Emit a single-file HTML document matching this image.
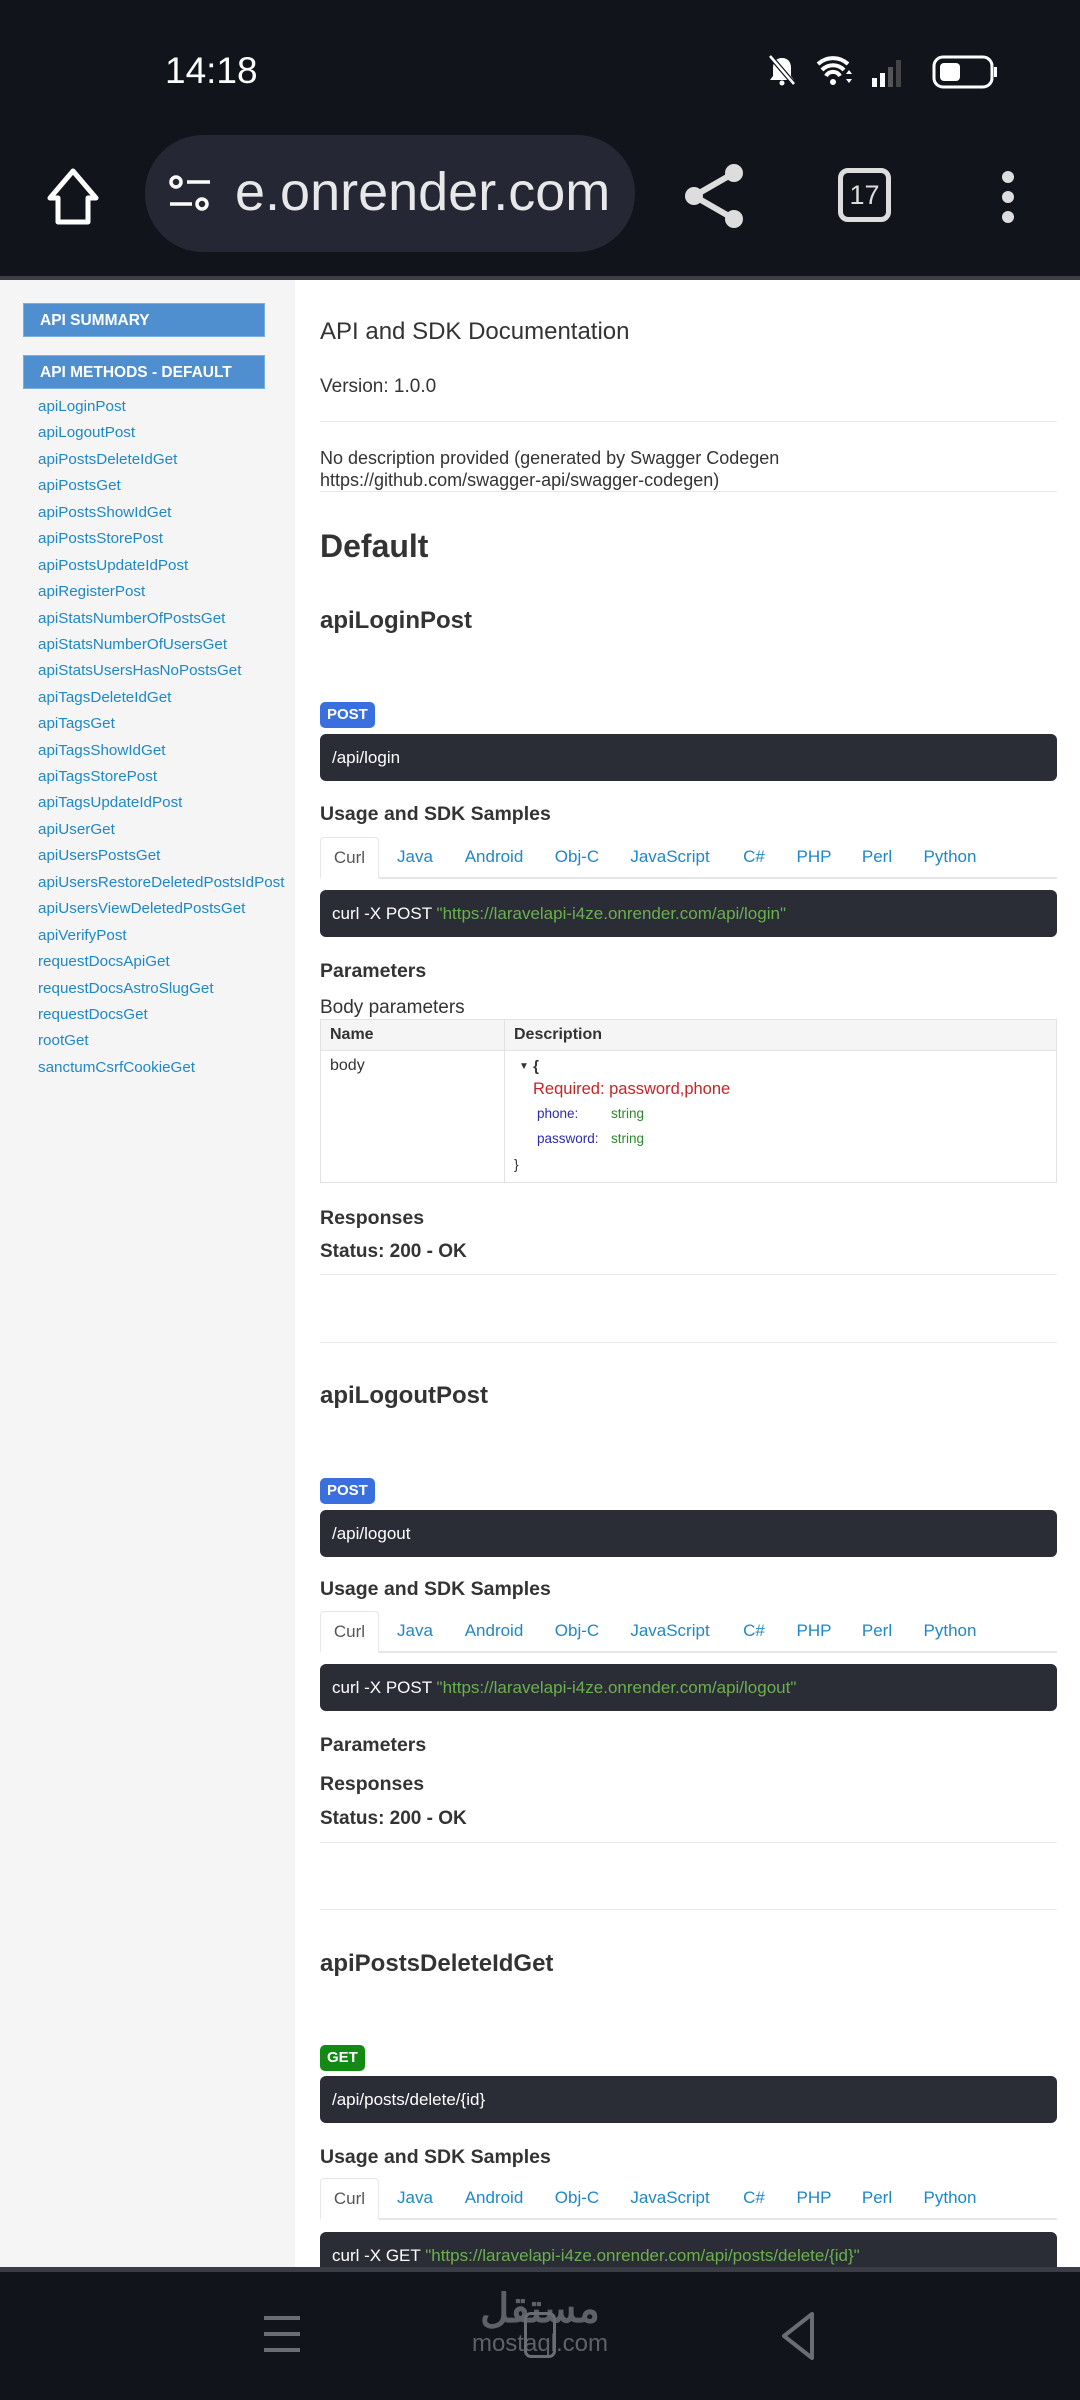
<!DOCTYPE html>
<html><head><meta charset="utf-8">
<style>
*{margin:0;padding:0;box-sizing:border-box}
body{width:1080px;height:2400px;position:relative;overflow:hidden;background:#fff;font-family:"Liberation Sans",Arial,sans-serif;color:#333}
.a{position:absolute;white-space:nowrap}
#top{position:absolute;left:0;top:0;width:1080px;height:280px;background:#11141b;border-bottom:4px solid #3c3f47}
#side{position:absolute;left:0;top:280px;width:295px;height:1990px;background:#f5f5f5}
.btn{position:absolute;left:23px;width:242px;height:34px;background:#4f8fcf;border:1px solid #7aaee0;color:#fff;font-weight:bold;font-size:15.5px;line-height:33px;padding-left:16px}
.lk{position:absolute;left:38px;font-size:15.2px;color:#1e88c7;line-height:20px}
.hr{position:absolute;left:320px;width:737px;height:1px;background:#e8e8e8}
.bar{position:absolute;left:320px;width:737px;height:47px;background:#2a2c36;border-radius:6px;color:#fff;font-size:17px;line-height:47px;padding-left:12px}
.bar .g{color:#6bb04f}
.badge{position:absolute;left:320px;height:26px;border-radius:5px;color:#fff;font-weight:bold;font-size:15px;line-height:26px;padding:0 7px}
.h3{position:absolute;left:320px;font-size:24px;font-weight:bold;color:#333}
.h4{position:absolute;left:320px;font-size:19.5px;font-weight:bold;color:#333}
.tabs{position:absolute;left:320px;width:737px;height:42px;border-bottom:2px solid #e6e6e6}
.tabs .cu{position:absolute;left:0;top:0;width:59px;height:42px;border:1px solid #e6e6e6;border-bottom:2px solid #fff;background:#fff;border-radius:4px 4px 0 0;color:#555;font-size:17px;line-height:40px;text-align:center}
.tabs span{position:absolute;top:0;line-height:40px;font-size:17px;color:#1e88c7;transform:translateX(-50%)}
#bot{position:absolute;left:0;top:2267px;width:1080px;height:133px;background:#11141b;border-top:5px solid #3a3d45}
</style></head><body>
<div id="top">
 <div class="a" style="left:165px;top:50px;font-size:37px;color:#fff">14:18</div>
 <svg class="a" style="left:760px;top:50px" width="250" height="44" viewBox="0 0 250 44">
  <path d="M22 8c-6 0-9 4-9 10v8l-3 4h24l-3-4v-8c0-6-3-10-9-10z" fill="#fff"/>
  <line x1="10" y1="6" x2="34" y2="34" stroke="#11141b" stroke-width="5"/>
  <line x1="10" y1="6" x2="34" y2="34" stroke="#fff" stroke-width="2.5"/>
  <circle cx="22" cy="33" r="2.5" fill="#fff"/>
  <path d="M58 14a22 22 0 0 1 30 0" stroke="#fff" stroke-width="4" fill="none"/>
  <path d="M62 20a15 15 0 0 1 22 0" stroke="#fff" stroke-width="4" fill="none"/>
  <path d="M66 26a8 8 0 0 1 14 0" stroke="#fff" stroke-width="4" fill="none"/>
  <circle cx="73" cy="32" r="3" fill="#fff"/>
  <path d="M86 24l3-4 3 4zM86 29l3 4 3-4z" fill="#fff"/>
  <rect x="112" y="28" width="5" height="9" fill="#fff"/>
  <rect x="120" y="23" width="5" height="14" fill="#fff"/>
  <rect x="128" y="17" width="5" height="20" fill="#555"/>
  <rect x="136" y="10" width="5" height="27" fill="#444"/>
  <rect x="174" y="7" width="58" height="30" rx="9" stroke="#fff" stroke-width="3" fill="none"/>
  <rect x="180" y="13" width="20" height="18" rx="4" fill="#fff"/>
  <rect x="234" y="17" width="3" height="10" fill="#fff"/>
 </svg>
 <svg class="a" style="left:44px;top:165px" width="58" height="62" viewBox="0 0 58 62"><path d="M29 6L6 33h8v24h30V33h8z" stroke="#fff" stroke-width="5" fill="none" stroke-linejoin="round"/></svg>
 <div class="a" style="left:145px;top:135px;width:490px;height:117px;border-radius:58px;background:#252834;overflow:hidden">
  <svg class="a" style="left:23px;top:40px" width="44" height="38" viewBox="0 0 44 38"><circle cx="8" cy="7" r="5" stroke="#fff" stroke-width="3.5" fill="none"/><line x1="19" y1="7" x2="42" y2="7" stroke="#fff" stroke-width="3.5"/><line x1="2" y1="29" x2="24" y2="29" stroke="#fff" stroke-width="3.5"/><circle cx="34" cy="29" r="5" stroke="#fff" stroke-width="3.5" fill="none"/></svg>
  <div class="a" style="left:90px;top:26px;font-size:54px;color:#e8e8ea;letter-spacing:0px">e.onrender.com</div>
 </div>
 <svg class="a" style="left:684px;top:163px" width="62" height="66" viewBox="0 0 62 66"><circle cx="50" cy="10" r="9" fill="#ddd"/><circle cx="10" cy="33" r="9" fill="#ddd"/><circle cx="50" cy="56" r="9" fill="#ddd"/><path d="M50 10L10 33L50 56" stroke="#ddd" stroke-width="6" fill="none"/></svg>
 <div class="a" style="left:838px;top:168px;width:53px;height:54px;border:5px solid #ddd;border-radius:10px;color:#ddd;font-size:27px;text-align:center;line-height:44px">17</div>
 <svg class="a" style="left:998px;top:168px" width="20" height="58" viewBox="0 0 20 58"><circle cx="10" cy="9" r="6" fill="#ddd"/><circle cx="10" cy="29" r="6" fill="#ddd"/><circle cx="10" cy="49" r="6" fill="#ddd"/></svg>
</div>

<div id="side">
 <div class="btn" style="top:23px">API SUMMARY</div>
 <div class="btn" style="top:75px">API METHODS - DEFAULT</div>
</div>
<div class="lk" style="top:397px">apiLoginPost</div>
<div class="lk" style="top:423px">apiLogoutPost</div>
<div class="lk" style="top:450px">apiPostsDeleteIdGet</div>
<div class="lk" style="top:476px">apiPostsGet</div>
<div class="lk" style="top:503px">apiPostsShowIdGet</div>
<div class="lk" style="top:529px">apiPostsStorePost</div>
<div class="lk" style="top:556px">apiPostsUpdateIdPost</div>
<div class="lk" style="top:582px">apiRegisterPost</div>
<div class="lk" style="top:609px">apiStatsNumberOfPostsGet</div>
<div class="lk" style="top:635px">apiStatsNumberOfUsersGet</div>
<div class="lk" style="top:661px">apiStatsUsersHasNoPostsGet</div>
<div class="lk" style="top:688px">apiTagsDeleteIdGet</div>
<div class="lk" style="top:714px">apiTagsGet</div>
<div class="lk" style="top:741px">apiTagsShowIdGet</div>
<div class="lk" style="top:767px">apiTagsStorePost</div>
<div class="lk" style="top:793px">apiTagsUpdateIdPost</div>
<div class="lk" style="top:820px">apiUserGet</div>
<div class="lk" style="top:846px">apiUsersPostsGet</div>
<div class="lk" style="top:873px">apiUsersRestoreDeletedPostsIdPost</div>
<div class="lk" style="top:899px">apiUsersViewDeletedPostsGet</div>
<div class="lk" style="top:926px">apiVerifyPost</div>
<div class="lk" style="top:952px">requestDocsApiGet</div>
<div class="lk" style="top:979px">requestDocsAstroSlugGet</div>
<div class="lk" style="top:1005px">requestDocsGet</div>
<div class="lk" style="top:1031px">rootGet</div>
<div class="lk" style="top:1058px">sanctumCsrfCookieGet</div>

<div class="a" style="left:320px;top:318px;font-size:24px;color:#333">API and SDK Documentation</div>
<div class="a" style="left:320px;top:376px;font-size:19px;color:#333">Version: 1.0.0</div>
<div class="hr" style="top:421px"></div>
<div class="a" style="left:320px;top:447px;font-size:18px;line-height:22px;color:#333">No description provided (generated by Swagger Codegen<br>https://github.com/swagger-api/swagger-codegen)</div>
<div class="hr" style="top:491px"></div>
<div class="a" style="left:320px;top:528px;font-size:32px;font-weight:bold;color:#333">Default</div>

<div class="h3" style="top:607px">apiLoginPost</div>
<div class="badge" style="top:702px;background:#3a6fe0">POST</div>
<div class="bar" style="top:734px">/api/login</div>
<div class="h4" style="top:803px">Usage and SDK Samples</div>
<div class="tabs" style="top:837px"><div class="cu">Curl</div><span style="left:95px">Java</span><span style="left:174px">Android</span><span style="left:257px">Obj-C</span><span style="left:350px">JavaScript</span><span style="left:434px">C#</span><span style="left:494px">PHP</span><span style="left:557px">Perl</span><span style="left:630px">Python</span></div>
<div class="bar" style="top:890px">curl -X POST <span class="g">"https://laravelapi-i4ze.onrender.com/api/login"</span></div>
<div class="h4" style="top:960px">Parameters</div>
<div class="a" style="left:320px;top:997px;font-size:19px;color:#333">Body parameters</div>
<div class="a" style="left:320px;top:1019px;width:737px;height:164px;border:1px solid #e2e2e2">
 <div class="a" style="left:0;top:0;width:735px;height:31px;background:#f5f5f5;border-bottom:1px solid #e2e2e2"></div>
 <div class="a" style="left:183px;top:0;width:1px;height:162px;background:#e2e2e2"></div>
 <div class="a" style="left:9px;top:6px;font-size:16px;font-weight:bold;color:#333">Name</div>
 <div class="a" style="left:193px;top:6px;font-size:16px;font-weight:bold;color:#333">Description</div>
 <div class="a" style="left:9px;top:37px;font-size:16px;color:#333">body</div>
 <div class="a" style="left:198px;top:38px;font-size:15px;color:#333"><span style="font-size:10px;vertical-align:2px">▼</span> <b>{</b></div>
 <div class="a" style="left:212px;top:60px;font-size:16.5px;color:#c8232a">Required: password,phone</div>
 <div class="a" style="left:216px;top:86px;font-size:13.5px;color:#2b2bab">phone:</div>
 <div class="a" style="left:290px;top:86px;font-size:13.5px;color:#2a8a2a">string</div>
 <div class="a" style="left:216px;top:111px;font-size:13.5px;color:#2b2bab">password:</div>
 <div class="a" style="left:290px;top:111px;font-size:13.5px;color:#2a8a2a">string</div>
 <div class="a" style="left:193px;top:136px;font-size:14px;color:#333">}</div>
</div>
<div class="h4" style="top:1207px">Responses</div>
<div class="h4" style="top:1241px;font-size:19px">Status: 200 - OK</div>
<div class="hr" style="top:1274px"></div>
<div class="hr" style="top:1342px"></div>

<div class="h3" style="top:1382px">apiLogoutPost</div>
<div class="badge" style="top:1478px;background:#3a6fe0">POST</div>
<div class="bar" style="top:1510px">/api/logout</div>
<div class="h4" style="top:1578px">Usage and SDK Samples</div>
<div class="tabs" style="top:1611px"><div class="cu">Curl</div><span style="left:95px">Java</span><span style="left:174px">Android</span><span style="left:257px">Obj-C</span><span style="left:350px">JavaScript</span><span style="left:434px">C#</span><span style="left:494px">PHP</span><span style="left:557px">Perl</span><span style="left:630px">Python</span></div>
<div class="bar" style="top:1664px">curl -X POST <span class="g">"https://laravelapi-i4ze.onrender.com/api/logout"</span></div>
<div class="h4" style="top:1734px">Parameters</div>
<div class="h4" style="top:1773px">Responses</div>
<div class="h4" style="top:1808px;font-size:19px">Status: 200 - OK</div>
<div class="hr" style="top:1842px"></div>
<div class="hr" style="top:1909px"></div>

<div class="h3" style="top:1950px">apiPostsDeleteIdGet</div>
<div class="badge" style="top:2045px;background:#138a13">GET</div>
<div class="bar" style="top:2076px">/api/posts/delete/{id}</div>
<div class="h4" style="top:2146px">Usage and SDK Samples</div>
<div class="tabs" style="top:2178px"><div class="cu">Curl</div><span style="left:95px">Java</span><span style="left:174px">Android</span><span style="left:257px">Obj-C</span><span style="left:350px">JavaScript</span><span style="left:434px">C#</span><span style="left:494px">PHP</span><span style="left:557px">Perl</span><span style="left:630px">Python</span></div>
<div class="bar" style="top:2232px">curl -X GET <span class="g">"https://laravelapi-i4ze.onrender.com/api/posts/delete/{id}"</span></div>

<div id="bot">
 <svg class="a" style="left:262px;top:40px" width="40" height="44" viewBox="0 0 40 44"><rect x="2" y="4" width="36" height="4" fill="#6a6d74"/><rect x="2" y="20" width="36" height="4" fill="#6a6d74"/><rect x="2" y="36" width="36" height="4" fill="#6a6d74"/></svg>
 <div class="a" style="left:470px;top:15px;width:140px;text-align:center;font-family:'Liberation Sans','Noto Sans CJK SC',sans-serif;font-size:40px;font-weight:bold;color:#5e6168;line-height:44px">مستقل</div>
 <div class="a" style="left:470px;top:58px;width:140px;text-align:center;font-size:24px;color:#5e6168">mostaql.com</div>
 <div class="a" style="left:524px;top:40px;width:32px;height:46px;border:3px solid #6a6d74;border-radius:7px"></div>
 <svg class="a" style="left:778px;top:38px" width="40" height="52" viewBox="0 0 40 52"><path d="M34 4L6 26L34 48Z" stroke="#6a6d74" stroke-width="4" fill="none" stroke-linejoin="round"/></svg>
</div>
</body></html>
